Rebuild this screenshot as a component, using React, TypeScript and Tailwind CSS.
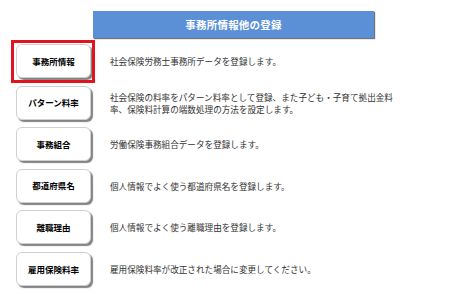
import React from 'react';

const rows = [
  { label: '事務所情報', text: ['社会保険労務士事務所データを登録します。'], active: true },
  {
    label: 'パターン料率',
    text: ['社会保険の料率をパターン料率として登録、また子ども・子育て拠出金料', '率、保険料計算の端数処理の方法を設定します。'],
  },
  { label: '事務組合', text: ['労働保険事務組合データを登録します。'] },
  { label: '都道府県名', text: ['個人情報でよく使う都道府県名を登録します。'] },
  { label: '離職理由', text: ['個人情報でよく使う離職理由を登録します。'] },
  { label: '雇用保険料率', text: ['雇用保険料率が改正された場合に変更してください。'] },
];

export default function App() {
  return (
    <div
      className="w-[450px] h-[294px] bg-white overflow-hidden"
      style={{ fontFamily: '"Noto Sans CJK JP", "Noto Sans", sans-serif' }}
    >
      <div className="pt-[11px] pl-[93px]">
        <div className="w-[281px] h-[27px] bg-[#5b8fd6] shadow-[1px_1px_1px_rgba(80,80,80,0.8)] flex items-center justify-center text-white font-bold text-[10.5px] tracking-[0.2px]">
          事務所情報他の登録
        </div>
      </div>

      <div className="pl-[16px] pt-[6px] flex flex-col gap-[7.6px]">
        {rows.map((row) => (
          <div key={row.label} className="flex items-center">
            <div className="relative shrink-0">
              <div className="w-[75px] h-[34px] rounded-[6px] bg-white border border-[#d0d0d0] shadow-[2px_2px_1px_rgba(90,90,90,0.75)] flex items-center justify-center text-[8.5px] font-bold text-black">
                {row.label}
              </div>
              {row.active && (
                <div className="absolute left-[-5px] top-[-4px] w-[84px] h-[43px] border-[3px] border-[#e0141e]" />
              )}
            </div>
            <div className="ml-[19px] text-[8.6px] leading-[12px] text-[#333]">
              {row.text.map((t) => (
                <div key={t}>{t}</div>
              ))}
            </div>
          </div>
        ))}
      </div>
    </div>
  );
}
